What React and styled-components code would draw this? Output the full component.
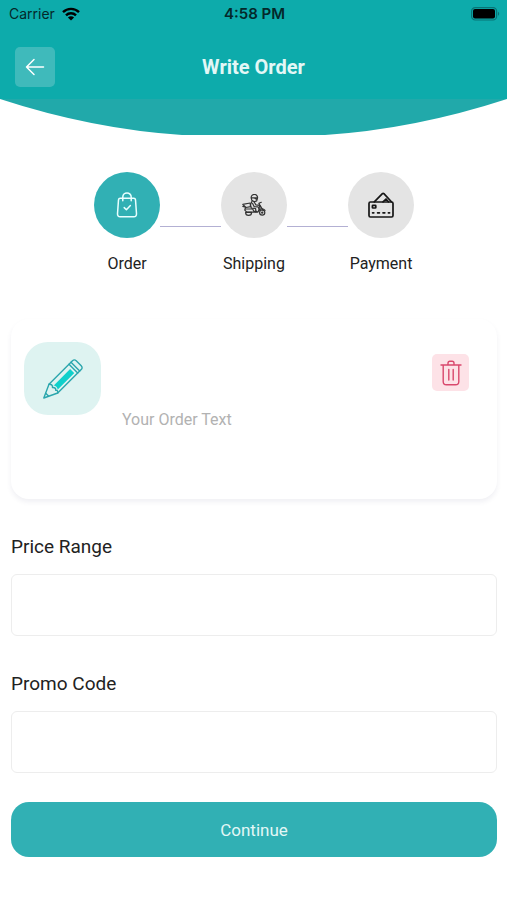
import {useState} from "react";
import styled, {createGlobalStyle} from "styled-components";

const colors = {
    header: "#0dabab",
    curve: "#21a9aa",
    primary: "#31b0b4",
    mint: "#def3f1",
    pink: "#fde2e7",
    red: "#d9486d",
    grey: "#e4e4e4",
    border: "#ededed",
    line: "#b3b0d3",
    text: "#222222",
    placeholder: "#b2b2b2",
    white: "#ffffff",
}

const GlobalStyle = createGlobalStyle`
  * {
    box-sizing: border-box;
  }
  body {
    margin: 0;
    background: ${colors.white};
    color: ${colors.text};
    font-family: Roboto, "Liberation Sans", sans-serif;
  }
  button, input, textarea {
    font-family: inherit;
  }
`
const Page = styled.div`
  min-height: 100vh;
  overflow-x: hidden;
`
const Header = styled.header`
  background: ${colors.header};
`
const StatusBar = styled.div`
  display: grid;
  grid-template-columns: 1fr auto 1fr;
  align-items: center;
  height: 28px;
  padding: 0 7px 0 9px;
  color: #04282a;
  font: 14px/20px Inter, "Liberation Sans", sans-serif;
`
const Carrier = styled.div`
  display: flex;
  align-items: center;
  gap: 7px;
`
const Time = styled.time`
  font-size: 15px;
  font-weight: 600;
`
const Battery = styled.svg`
  justify-self: end;
`
const NavBar = styled.div`
  display: grid;
  grid-template-columns: 40px 1fr 40px;
  align-items: center;
  height: 71px;
  padding: 7px 15px 0;
`
const BackBtn = styled.button`
  display: grid;
  place-items: center;
  width: 40px;
  height: 40px;
  padding: 0;
  border: 0;
  border-radius: 5px;
  background: #3fbabb;
  cursor: pointer;
`
const Title = styled.h1`
  margin: 0;
  color: #e3f7f6;
  font-size: 20px;
  line-height: 24px;
  font-weight: 700;
  text-align: center;
`
const Curve = styled.svg`
  display: block;
  width: 100%;
  height: 37px;
`
const Content = styled.main`
  padding: 36px 10px 44px 11px;
`
const Steps = styled.ol`
  display: flex;
  justify-content: center;
  margin: 0;
  padding: 0;
  list-style: none;
`
const Step = styled.li`
  display: flex;
  flex-direction: column;
  align-items: center;
  gap: 14px;
  width: 66px;
  font-size: 16px;
  line-height: 24px;
`
const StepCircle = styled.div`
  display: grid;
  place-items: center;
  width: 66px;
  height: 66px;
  border-radius: 50%;
  background: ${({$active}) => $active ? colors.primary : colors.grey};
`
const StepLine = styled.li`
  width: 61px;
  height: 55px;
  border-bottom: 1px solid ${colors.line};
`
const OrderCard = styled.section`
  display: flex;
  align-items: flex-start;
  height: 180px;
  margin-top: 43px;
  padding: 23px 28px 23px 13px;
  border-radius: 18px;
  background: ${colors.white};
  box-shadow: 0 3px 5px rgba(60, 70, 120, 0.08);
`
const PencilBox = styled.div`
  display: grid;
  place-items: center;
  flex: none;
  width: 77px;
  height: 73px;
  border-radius: 24px;
  background: ${colors.mint};
`
const OrderText = styled.textarea`
  flex: 1;
  min-width: 0;
  height: 134px;
  padding: 66px 20px 0 21px;
  border: 0;
  outline: 0;
  resize: none;
  background: transparent;
  color: ${colors.text};
  font-size: 16px;
  line-height: 24px;

  &::placeholder {
    color: ${colors.placeholder};
    opacity: 1;
  }
`
const DeleteBtn = styled.button`
  display: grid;
  place-items: center;
  flex: none;
  width: 37px;
  height: 37px;
  margin-top: 12px;
  padding: 0;
  border: 0;
  border-radius: 5px;
  background: ${colors.pink};
  cursor: pointer;
`
const Field = styled.div`
  margin-top: 33px;
`
const FieldLabel = styled.label`
  display: block;
  margin-bottom: 12px;
  font-size: 19px;
  line-height: 30px;
`
const FieldInput = styled.input`
  display: block;
  width: 100%;
  height: 62px;
  padding: 0 16px;
  border: 1px solid ${colors.border};
  border-radius: 6px;
  outline: 0;
  background: ${colors.white};
  color: ${colors.text};
  font-size: 16px;
`
const ContinueBtn = styled.button`
  display: block;
  width: 100%;
  height: 55px;
  margin-top: 29px;
  border: 0;
  border-radius: 18px;
  background: ${colors.primary};
  color: #e3f7f6;
  font-size: 17px;
  line-height: 24px;
  cursor: pointer;
`

const WifiIcon = () => (
    <svg width="18" height="14" viewBox="0 0 18 14" aria-hidden="true">
        <g fill="none" stroke="#000" strokeWidth="2.4">
            <path d="M1 5.2a11.4 11.4 0 0 1 16 0"/>
            <path d="M4 8.3a7.1 7.1 0 0 1 10 0"/>
        </g>
        <path d="M9 13.6 5.9 10.5a4.4 4.4 0 0 1 6.2 0z" fill="#000"/>
    </svg>
)

const BatteryIcon = () => (
    <Battery width="29" height="14" viewBox="0 0 29 14" aria-hidden="true">
        <rect x="0.6" y="0.6" width="25" height="12.4" rx="3.6" fill="none" stroke="#087476" strokeWidth="1.2"/>
        <rect x="2" y="2" width="22" height="9.6" rx="2" fill="#000"/>
        <path d="M27 4.8v4a2.3 2.3 0 0 0 0-4z" fill="#087476"/>
    </Battery>
)

const BackIcon = () => (
    <svg width="20" height="18" viewBox="0 0 20 18" fill="none" stroke="#fff" strokeWidth="1.5" strokeLinecap="round" strokeLinejoin="round" aria-hidden="true">
        <path d="M18.5 9H1.5M9 1.5 1.5 9 9 16.5"/>
    </svg>
)

const BagIcon = () => (
    <svg width="22" height="26" viewBox="0 0 22 26" fill="none" stroke="#e9ffff" strokeWidth="1.5" strokeLinecap="round" strokeLinejoin="round" aria-hidden="true">
        <path d="M4.2 6.3h13.6c1 0 1.6.6 1.7 1.5l1 14c.1 1.8-.9 2.9-2.6 2.9H4.1c-1.7 0-2.7-1.1-2.6-2.9l1-14c.1-.9.7-1.5 1.7-1.5z"/>
        <path d="M6.8 8.8V5.1a4.2 4.2 0 0 1 8.4 0v3.7M8.2 15.6l2.2 2.2 4-4.2"/>
    </svg>
)

const ScooterIcon = () => (
    <svg width="24" height="23" viewBox="0 0 24 23" fill="none" stroke="#333" strokeWidth="1.2" strokeLinecap="round" strokeLinejoin="round" aria-hidden="true">
        <path d="M9.2 4.1a3.2 3.2 0 1 1 6.2.5l-.7 2.3-2.5.8-2.4-1.5zM9.4 3.8h5.8M12.4 4.1l2 1.2"/>
        <path d="M10 7.2 8.4 11l1 3.2 4.2.3.3 3.5M12.2 8l1.6 2.8 4.1.6M10.6 9.5l1.6 3.2 4 .2 1 3"/>
        <path d="M.8 10.4 8.2 9l.4 3.6-4.6.9zM.8 12.4l2.8.8M3.4 13.8 2.8 16.2l2 2h11l2.1-3.5-.7-5.5M16.8 9.2l2.5-.9M18 11.2l3.2 5.4"/>
        <path d="M3.3 15h7.4l1.2 2.4h3.2"/>
        <path d="M3.6 18.4a3 3 0 0 0 6 0z"/>
        <circle cx="20.2" cy="18.6" r="2.6"/>
        <circle cx="20.2" cy="18.6" r=".6"/>
        <path d="M16.6 16.8c1-2.2 4.6-2.9 6.4-.4"/>
    </svg>
)

const CardIcon = () => (
    <svg width="26" height="26" viewBox="0 0 26 26" fill="none" stroke="#161616" strokeWidth="1.7" strokeLinecap="round" strokeLinejoin="round" aria-hidden="true">
        <rect x="1" y="10" width="24" height="15" rx="1.4"/>
        <path d="M6.3 9.8 14.4 1.6c.5-.5 1-.5 1.5 0l7.5 8.2M15 9.8l3-2.8 2.4 2.8"/>
        <rect x="4.4" y="13.4" width="3.4" height="2.6" rx=".6"/>
        <path d="M4.6 20.8h1.2M9.6 20.8h1.8M15 20.8h1.8M20.4 20.8h1.2"/>
    </svg>
)

const PencilIcon = () => (
    <svg width="40" height="40" viewBox="0 0 40 40" fill="none" stroke="#2ba6ad" strokeWidth="1.4" strokeLinejoin="round" strokeLinecap="round" aria-hidden="true">
        <path d="M9.8 26.2 26.6 9.4l5 5-16.8 16.8c-.2-2.9-2-4.8-5-5z" fill="#0fd0cb" stroke="none"/>
        <path d="m7.6 25.2 18.8-18.8 2.2 2.2L9.8 27.4zM13.8 31.6l18.8-18.8 1.2 1.2L15 32.8z" fill="#def3f1" stroke="none"/>
        <path d="M.8 39 6 25.3 29.5 1.8c1.2-1.2 2.5-1.2 3.7 0l5 5c1.2 1.2 1.2 2.5 0 3.7L14.7 34z"/>
        <path d="M6 25.3c2.2-.4 3.8.8 3.5 3.2 2.2-.3 3.6 1 3.2 2.9 1.6-.4 2.4.8 2 2.6"/>
        <path d="m26 5.3 8.7 8.7M28 3.3l8.7 8.7M2.7 34.3 5.5 37"/>
    </svg>
)

const TrashIcon = () => (
    <svg width="22" height="26" viewBox="0 0 22 26" fill="none" stroke={colors.red} strokeWidth="1.4" strokeLinecap="round" strokeLinejoin="round" aria-hidden="true">
        <path d="M1 5h20M3.2 5v16.5c0 2 1.3 3.3 3.2 3.3h9.2c1.9 0 3.2-1.3 3.2-3.3V5M8 5V3.2c0-1.2.7-1.9 1.9-1.9h2.2c1.2 0 1.9.7 1.9 1.9V5M8.8 9.5V20M13.2 9.5V20"/>
    </svg>
)

const App = () => {

    const [orderText, setOrderText] = useState("")

    return (
        <Page>
            <GlobalStyle/>
            <Header>
                <StatusBar>
                    <Carrier>Carrier <WifiIcon/></Carrier>
                    <Time>4:58 PM</Time>
                    <BatteryIcon/>
                </StatusBar>
                <NavBar>
                    <BackBtn aria-label="Back"><BackIcon/></BackBtn>
                    <Title>Write Order</Title>
                </NavBar>
            </Header>
            <Curve viewBox="0 0 507 37" preserveAspectRatio="none" aria-hidden="true">
                <path d="M0 0H507Q415 30 325 36H182Q92 30 0 0z" fill={colors.curve}/>
            </Curve>
            <Content>
                <Steps>
                    <Step>
                        <StepCircle $active><BagIcon/></StepCircle>
                        Order
                    </Step>
                    <StepLine aria-hidden="true"/>
                    <Step>
                        <StepCircle><ScooterIcon/></StepCircle>
                        Shipping
                    </Step>
                    <StepLine aria-hidden="true"/>
                    <Step>
                        <StepCircle><CardIcon/></StepCircle>
                        Payment
                    </Step>
                </Steps>
                <OrderCard>
                    <PencilBox><PencilIcon/></PencilBox>
                    <OrderText
                        aria-label="Your Order Text"
                        placeholder="Your Order Text"
                        value={orderText}
                        onChange={e => setOrderText(e.target.value)}
                    />
                    <DeleteBtn aria-label="Delete" onClick={() => setOrderText("")}><TrashIcon/></DeleteBtn>
                </OrderCard>
                <Field>
                    <FieldLabel htmlFor="price">Price Range</FieldLabel>
                    <FieldInput id="price"/>
                </Field>
                <Field>
                    <FieldLabel htmlFor="promo">Promo Code</FieldLabel>
                    <FieldInput id="promo"/>
                </Field>
                <ContinueBtn>Continue</ContinueBtn>
            </Content>
        </Page>
    )
}

export default App
